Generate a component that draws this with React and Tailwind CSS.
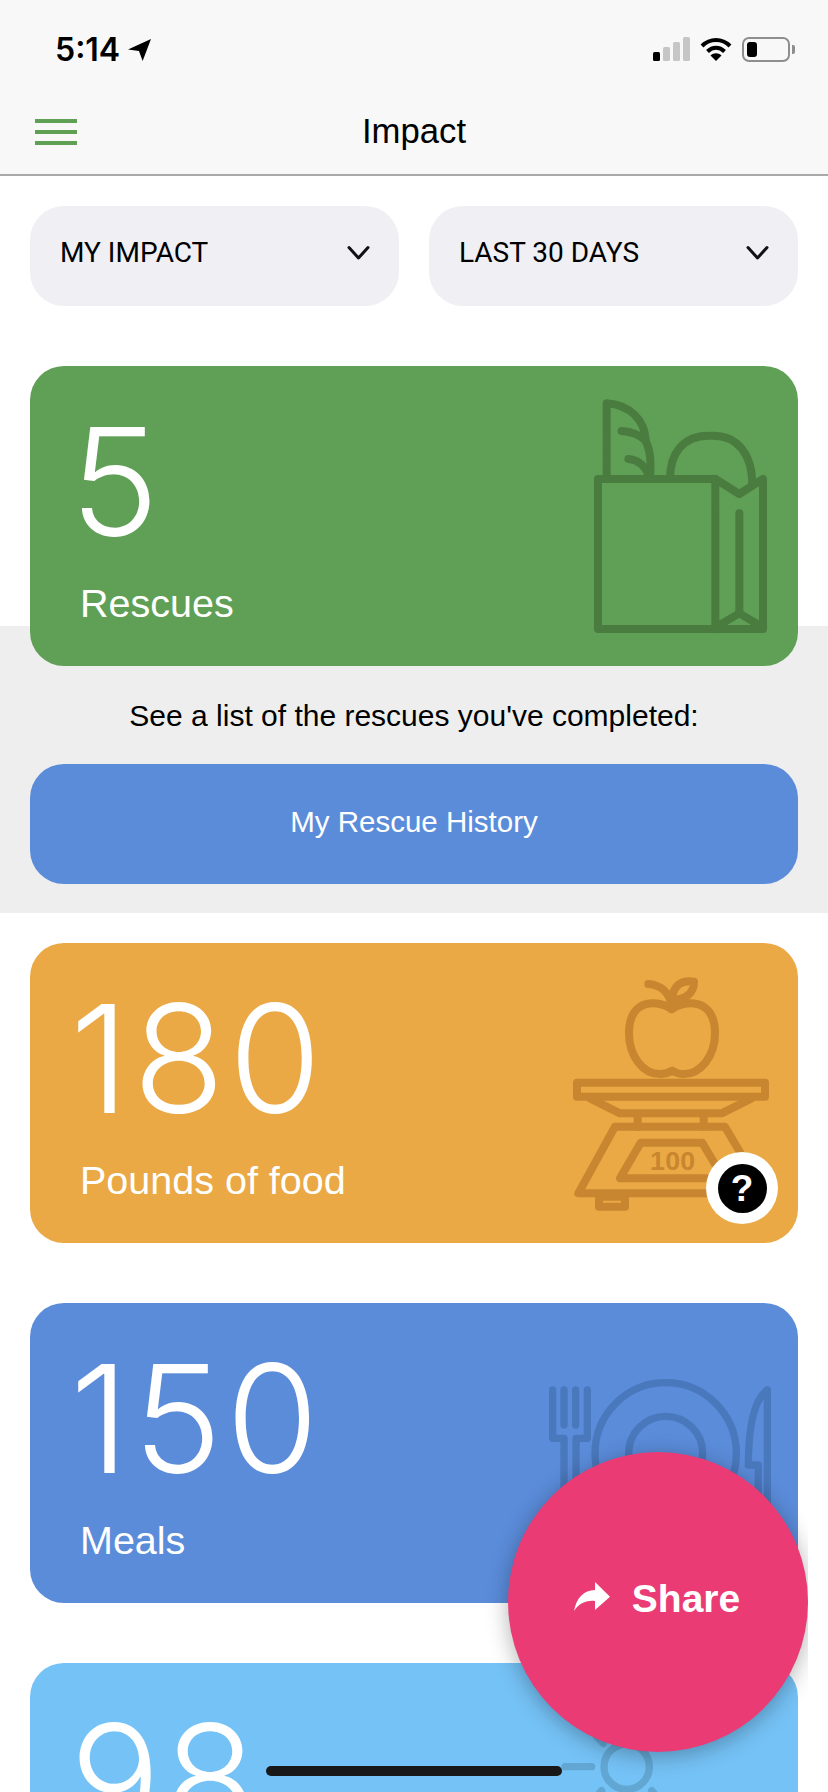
const Chevron = () => (
  <svg width="23" height="16" viewBox="0 0 23 16" fill="none" className="shrink-0 mb-[6px] -mr-[1px]">
    <path d="M2 2.5 L11.5 13 L21 2.5" stroke="#111" strokeWidth="3" strokeLinecap="round" strokeLinejoin="round" />
  </svg>
);

const Dropdown = ({ label }) => (
  <div className="flex-1 h-[100px] rounded-[34px] bg-[#efeff4] flex items-center justify-between pl-[30px] pr-[30px]">
    <span className="font-['Roboto',sans-serif] text-[28px] text-black leading-none mb-[7px]">{label}</span>
    <Chevron />
  </div>
);

const BagIcon = () => (
  <svg width="258" height="300" viewBox="0 -12 774 900" fill="none" stroke="#4a7c40" strokeWidth="24" strokeLinecap="round" strokeLinejoin="round" className="shrink-0">
    <rect x="174" y="327" width="352" height="450" />
    <path d="M526 327 L598 372 L669 327 V777 H526" />
    <path d="M598 430 V725" />
    <path d="M526 772 L598 730 L669 772" />
    <path d="M200 327 V100 C270 105 315 150 317 212 C335 250 332 290 330 327" />
    <path d="M245 183 C275 185 300 195 317 212" />
    <path d="M265 267 C290 268 315 285 325 315" />
    <path d="M390 327 C390 250 430 197 505 197 H520 C590 197 637 250 637 345" />
  </svg>
);

const ScaleIcon = () => (
  <svg width="258" height="300" viewBox="0 -21 774 900" fill="none" stroke="#c7862f" strokeWidth="24" strokeLinecap="round" strokeLinejoin="round" className="shrink-0">
    <path d="M395 178 C360 150 267 140 267 250 C267 320 310 372 360 372 C375 372 388 368 397 362 C405 368 418 372 432 372 C480 372 525 320 525 250 C525 140 430 150 395 178 Z" />
    <path d="M395 170 C390 130 365 105 325 102" />
    <path d="M395 142 C405 100 430 90 462 95 C462 130 435 150 400 148" />
    <rect x="111" y="398" width="564" height="42" />
    <path d="M150 445 L240 490 H545 L635 445" />
    <path d="M293 495 V530 M491 495 V530" />
    <path d="M605 615 L555 530 H225 L115 730 H510" />
    <path d="M535 660 L487 578 H302 L240 685 H510" />
    <rect x="177" y="740" width="78" height="30" />
    <text x="330" y="661" fontFamily="'Liberation Sans',sans-serif" fontWeight="700" fontSize="80" stroke="none" fill="#c7862f" letterSpacing="1">100</text>
  </svg>
);

const PlateIcon = () => (
  <svg width="298" height="300" viewBox="0 -111 894 900" fill="none" stroke="#4a78bc" strokeWidth="22" strokeLinecap="round" strokeLinejoin="round" className="shrink-0">
    <path d="M158 150 V295 H192 V600 M262 150 V295 H228 V600" />
    <path d="M192 150 V255 M227 150 V255" />
    <circle cx="497" cy="340" r="212" />
    <circle cx="497" cy="340" r="111" />
    <path d="M802 150 V620 M802 150 C760 180 745 260 745 375 H775 V620" />
  </svg>
);

const SunIcon = () => (
  <svg width="298" height="300" viewBox="0 969 894 900" fill="none" stroke="#62a7d3" strokeWidth="22" strokeLinecap="round" strokeLinejoin="round" className="shrink-0">
    <circle cx="380" cy="1280" r="68" />
    <path d="M195 1280 H275" />
    <path d="M290 1190 L310 1210" />
    <path d="M285 1375 L305 1352 M475 1375 L455 1352" />
  </svg>
);

const Card = ({ bg, value, label, icon, children }) => (
  <div className={`relative z-10 h-[300px] rounded-[34px] flex justify-between overflow-hidden ${bg}`}>
    <div className="pl-[50px] pt-[37px] text-white">
      <div className="font-['Inter',sans-serif] font-light text-[150px] leading-[157px] -ml-[10px] tracking-[4px]">{value}</div>
      <div className="font-['Liberation_Sans',sans-serif] text-[39.5px] leading-[44px] pt-[21px]">{label}</div>
    </div>
    {icon}
    {children}
  </div>
);

export default function App() {
  return (
    <div className="relative w-[828px] h-[1792px] overflow-hidden bg-white font-['Liberation_Sans',sans-serif]">
      <header className="h-[176px] bg-[#f8f8f8] border-b-2 border-[#a9a9a9] flex flex-col">
        <div className="h-[100px] flex items-start justify-between pt-[37px] pl-[55px] pr-[33px]">
          <div className="flex items-center gap-[8px]">
            <span className="font-['Inter',sans-serif] font-semibold text-[32px] leading-[26px] text-black">5:14</span>
            <svg width="23" height="22" viewBox="0 0 22 21" className="shrink-0">
              <path d="M22 0 L14 21 L10.5 11.5 L0 10 Z" fill="#000" />
            </svg>
          </div>
          <div className="flex items-start gap-[10px]">
            <div className="flex items-end gap-[3px] h-[24px]">
              <div className="w-[7px] h-[9px] rounded-[1.5px] bg-black" />
              <div className="w-[7px] h-[14px] rounded-[1.5px] bg-[#c6c6c6]" />
              <div className="w-[7px] h-[19px] rounded-[1.5px] bg-[#c6c6c6]" />
              <div className="w-[7px] h-[24px] rounded-[1.5px] bg-[#c6c6c6]" />
            </div>
            <svg width="32" height="24" viewBox="0 0 32 24" fill="none" stroke="#000" strokeWidth="4" className="shrink-0">
              <path d="M2 9 C10 1 22 1 30 9" />
              <path d="M7.5 14.5 C12.5 9.5 19.5 9.5 24.5 14.5" />
              <path d="M16 24 L10.5 18.5 C13.5 15.5 18.5 15.5 21.500 18.5 Z" fill="#000" stroke="none" />
            </svg>
            <div className="flex items-center">
              <div className="w-[48px] h-[25px] rounded-[7px] border-2 border-[#8e8e8e] p-[3px]">
                <div className="w-[10px] h-full rounded-[3px] bg-black" />
              </div>
              <div className="w-[3px] h-[9px] rounded-r-[2px] bg-[#8e8e8e] ml-[2px]" />
            </div>
          </div>
        </div>
        <div className="relative flex-1 flex items-center justify-center pb-[12px]">
          <div className="absolute left-[35px] top-[19px] w-[42px] flex flex-col gap-[7px]">
            <div className="h-[4px] bg-[#5fa055]" />
            <div className="h-[4px] bg-[#5fa055]" />
            <div className="h-[4px] bg-[#5fa055]" />
          </div>
          <span className="text-[34.7px] leading-[40px] text-black">Impact</span>
        </div>
      </header>

      <div className="flex gap-[30px] px-[30px] pt-[30px] pb-[60px]">
        <Dropdown label="MY IMPACT" />
        <Dropdown label="LAST 30 DAYS" />
      </div>

      <div className="px-[30px]">
        <Card bg="bg-[#60a056]" value="5" label="Rescues" icon={<BagIcon />} />
      </div>

      <section className="-mt-[40px] bg-[#eeeeee] h-[287px] px-[30px] pt-[72px] mb-[30px]">
        <p className="text-[30px] leading-[36px] text-black text-center">See a list of the rescues you've completed:</p>
        <div className="mt-[30px] h-[120px] rounded-[34px] bg-[#5b8cda] flex items-center justify-center text-white text-[29.5px] pb-[4px]">My Rescue History</div>
      </section>

      <div className="flex flex-col gap-[60px] px-[30px]">
        <Card bg="bg-[#eaa944]" value="180" label="Pounds of food" icon={<ScaleIcon />}>
          <div className="absolute right-[20px] bottom-[19px] w-[72px] h-[72px] rounded-full bg-white flex items-center justify-center">
            <div className="w-[49px] h-[49px] rounded-full bg-black flex items-center justify-center text-white font-bold text-[37px] leading-none">?</div>
          </div>
        </Card>
        <Card bg="bg-[#5b8cda]" value="150" label="Meals" icon={<PlateIcon />} />
        <Card bg="bg-[#75c2f6]" value="98" label="" icon={<SunIcon />} />
      </div>

      <div className="absolute left-[458px] top-[1402px] w-[350px] h-[390px] overflow-hidden z-20">
        <div className="ml-[50px] mt-[50px] w-[300px] h-[300px] rounded-full bg-[#ea3b75] shadow-[0_4px_22px_rgba(0,0,0,0.3)] flex items-center justify-center gap-[22px] pr-[2px] pb-[8px]">
          <svg width="36" height="30" viewBox="0 0 36 30" className="shrink-0 mb-[2px]">
            <path d="M21 0 L36 14.7 L21 28 V19 C11 18 4.500 22.500 0 29 C2.700 15.500 9.500 8.500 21 8 Z" fill="#fff" />
          </svg>
          <span className="text-white font-bold text-[39px] leading-none">Share</span>
        </div>
      </div>

      <div className="absolute left-[266px] top-[1766px] w-[296px] h-[10px] rounded-full bg-[#181818] z-30" />
    </div>
  );
}
